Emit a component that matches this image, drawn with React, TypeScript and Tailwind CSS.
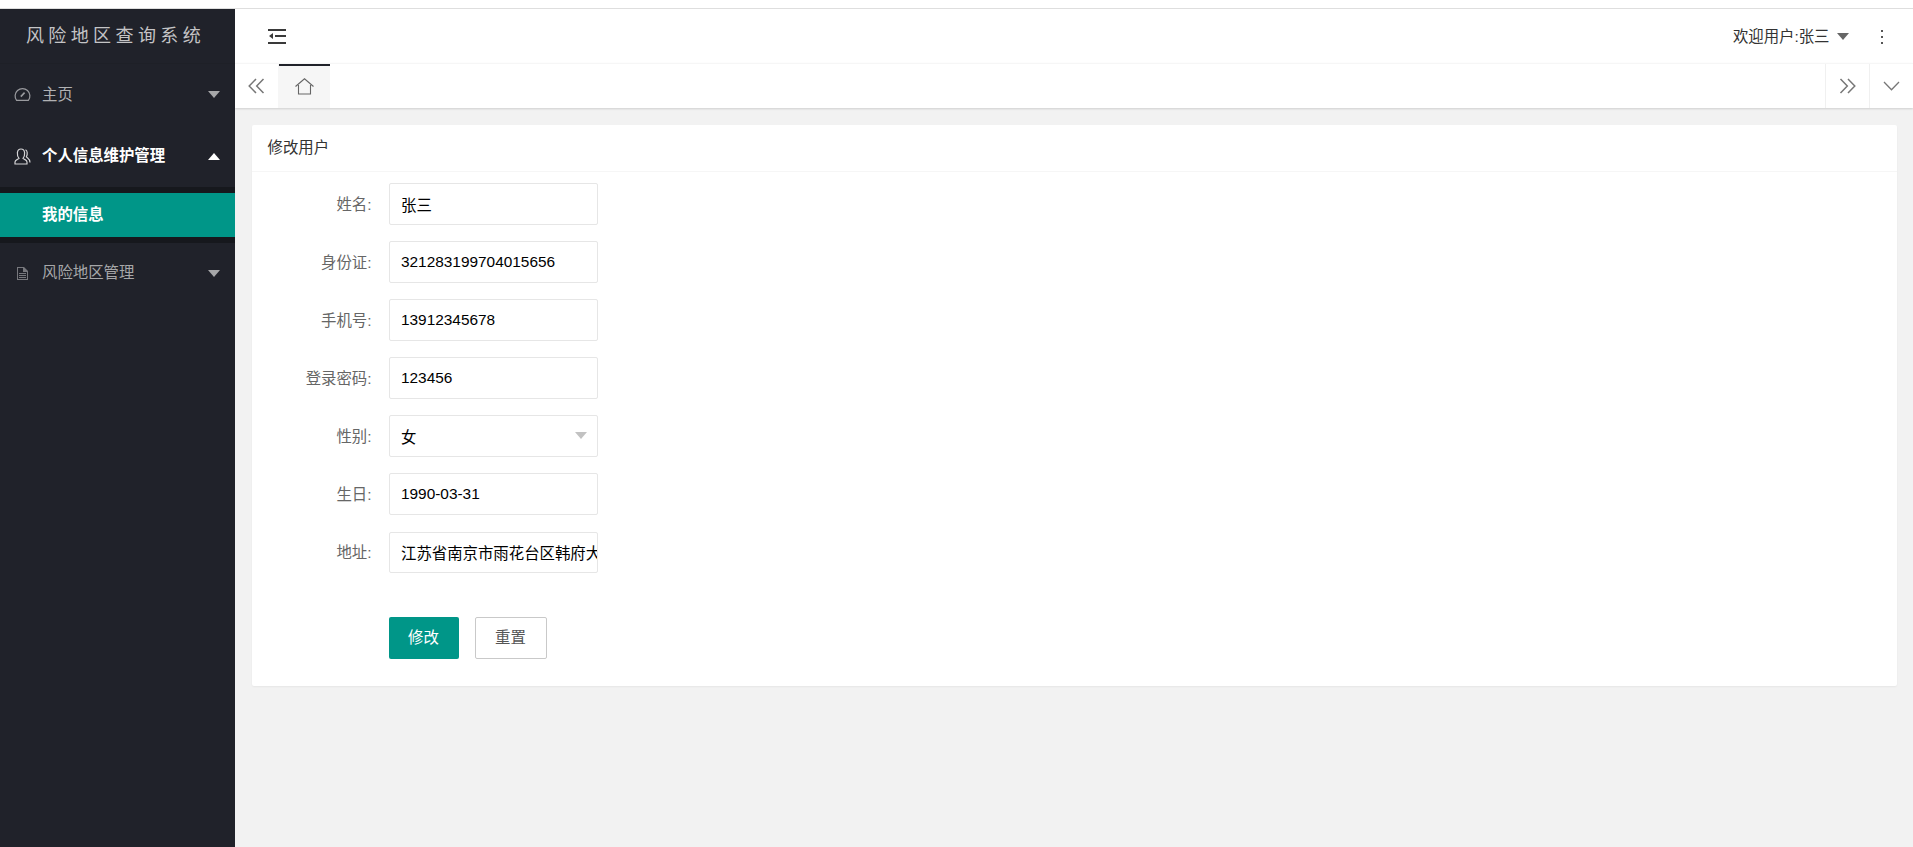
const fontStack = '[font-family:"Liberation_Sans","Noto_Sans_CJK_SC",sans-serif]';

const fields = [
  { label: "姓名:", value: "张三" },
  { label: "身份证:", value: "321283199704015656" },
  { label: "手机号:", value: "13912345678" },
  { label: "登录密码:", value: "123456" },
  { label: "性别:", value: "女", select: true },
  { label: "生日:", value: "1990-03-31" },
  { label: "地址:", value: "江苏省南京市雨花台区韩府大道99号" },
];

const GaugeIcon = () => (
  <svg width="17" height="15" viewBox="0 0 17 15" fill="none" stroke="#9a9b9f" strokeWidth="1.2">
    <path d="M2.6 13.4 A7.4 7.4 0 1 1 14.4 13.4 Z" />
    <path d="M6.8 9.6 L10.6 5.6" strokeWidth="1.6" />
  </svg>
);

const UserIcon = () => (
  <svg width="17" height="17" viewBox="0 0 17 17" fill="none" stroke="#d4d4d6" strokeWidth="1.2">
    <path d="M1 16 V14 C1 12 3.6 11.6 5 10.4 C3.4 8.6 3.2 6.8 3.4 4.6 C3.7 2 5.2 1 7 1 C8.8 1 10.3 2 10.6 4.6 C10.8 6.8 10.6 8.6 9 10.4 C10.4 11.6 13 12 13 14 V16 Z" />
    <path d="M11.5 1.8 C13.4 2.6 13.8 6 12.4 8.8 C13.6 10.4 16 10.6 16 14.6" />
  </svg>
);

const FileIcon = () => (
  <svg width="11" height="13" viewBox="0 0 11 13" fill="#77787d">
    <path d="M0 0 H7 L11 4 V13 H0 Z M1 1 V12 H10 V5 H6 V1 Z" />
    <path d="M2 6 H9 V7 H2 Z M2 8 H9 V9 H2 Z M2 10 H9 V11 H2 Z" />
  </svg>
);

const Caret = ({ up, color }: { up?: boolean; color: string }) => (
  <svg width="12" height="7" viewBox="0 0 12 7" fill={color}>
    <path d={up ? "M6 0 L12 7 H0 Z" : "M0 0 H12 L6 7 Z"} />
  </svg>
);

const App = () => {
  return (
    <div className={`h-screen flex flex-col bg-[#f2f2f2] overflow-hidden ${fontStack}`}>
      <div className="h-[9px] shrink-0 bg-white border-b border-[#dedede]" />
      <div className="flex-1 flex min-h-0">
        <aside className="w-[235px] shrink-0 bg-[#20222a] flex flex-col">
          <div className="h-[55px] pr-[4px] flex items-center justify-center text-[18px] tracking-[4.4px] text-[#c4c4c6] border-b border-[#1e2027]">
            风险地区查询系统
          </div>
          <div className="h-[61px] flex items-center text-[15.4px] text-[#b0b1b3]">
            <span className="w-[14px]" />
            <span className="w-[28px]"><GaugeIcon /></span>
            <span className="flex-1">主页</span>
            <span className="mr-[15px]"><Caret color="#a6a7a9" /></span>
          </div>
          <div className="h-[62px] flex items-center text-[15.4px] font-bold text-white">
            <span className="w-[14px]" />
            <span className="w-[28px]"><UserIcon /></span>
            <span className="flex-1">个人信息维护管理</span>
            <span className="mr-[15px]"><Caret up color="#ffffff" /></span>
          </div>
          <div className="py-[6px] bg-[#16181d]">
            <div className="h-[44px] bg-[#009688] pl-[42px] flex items-center text-[15.4px] font-bold text-white">
              我的信息
            </div>
          </div>
          <div className="h-[60px] flex items-center text-[15.4px] text-[#a6a7a9]">
            <span className="w-[17px]" />
            <span className="w-[25px]"><FileIcon /></span>
            <span className="flex-1">风险地区管理</span>
            <span className="mr-[15px]"><Caret color="#a6a7a9" /></span>
          </div>
        </aside>

        <main className="flex-1 min-w-0 flex flex-col">
          <header className="h-[54px] shrink-0 bg-white flex items-center">
            <svg className="ml-[33px]" width="18" height="15" viewBox="0 0 18 15" fill="#3a3a3a">
              <path d="M0 0 H18 V2 H0 Z M7 6 H18 V8 H7 Z M0 13 H18 V15 H0 Z M5 4 V10 L1 7 Z" />
            </svg>
            <div className="ml-auto flex items-center text-[15.4px] text-[#333] translate-y-px">
              欢迎用户:张三
              <span className="ml-[7px]"><Caret color="#666666" /></span>
              <span className="ml-[32px] mr-[30px] flex flex-col gap-[3.5px]">
                <span className="w-[2.5px] h-[2.5px] bg-[#555]" />
                <span className="w-[2.5px] h-[2.5px] bg-[#555]" />
                <span className="w-[2.5px] h-[2.5px] bg-[#555]" />
              </span>
            </div>
          </header>

          <nav className="h-[45px] shrink-0 bg-white flex border-t border-[#f6f6f6] shadow-[0_1px_2px_rgba(0,0,0,0.15)]">
            <div className="w-[43px] flex items-center justify-center">
              <svg width="17" height="16" viewBox="0 0 17 16" fill="none" stroke="#777" strokeWidth="1.5">
                <path d="M8 1 L1.2 8 L8 15 M15.5 1 L8.7 8 L15.5 15" />
              </svg>
            </div>
            <div className="relative w-[52px] bg-[#f6f6f6] flex items-center justify-center">
              <div className="absolute left-[1px] right-0 top-0 h-[2px] bg-[#20222a]" />
              <svg width="19" height="17" viewBox="0 0 19 17" fill="none" stroke="#666" strokeWidth="1.1">
                <path d="M0.5 8.5 L9.5 0.8 L18.5 8.5 M3.5 7 V16 H15.5 V7" />
              </svg>
            </div>
            <div className="ml-auto w-[44px] border-l border-[#f0f0f0] flex items-center justify-center">
              <svg width="17" height="16" viewBox="0 0 17 16" fill="none" stroke="#777" strokeWidth="1.5">
                <path d="M1.5 1 L8.3 8 L1.5 15 M9 1 L15.8 8 L9 15" />
              </svg>
            </div>
            <div className="w-[44px] border-l border-[#f0f0f0] flex items-center justify-center">
              <svg width="17" height="10" viewBox="0 0 17 10" fill="none" stroke="#777" strokeWidth="1.3">
                <path d="M1 1 L8.5 8.8 L16 1" />
              </svg>
            </div>
          </nav>

          <div className="p-[16.5px] pt-[17px]">
            <section className="h-[561px] bg-white rounded-[2px] shadow-[0_1px_2px_rgba(0,0,0,0.05)]">
              <div className="h-[47px] px-[16px] flex items-center text-[15.4px] text-[#333] border-b border-[#f6f6f6]">
                修改用户
              </div>
              <div className="pt-[11px]">
                {fields.map((field) => (
                  <div key={field.label} className="flex mb-[16.3px]">
                    <label className="w-[120px] h-[41.8px] pt-[1px] flex items-center justify-end text-[15.4px] text-[#666]">
                      {field.label}
                    </label>
                    <div className="relative ml-[17px] w-[209.5px] h-[41.8px]">
                      <input
                        readOnly
                        defaultValue={field.value}
                        className="w-full h-full pl-[11.5px] text-[15.4px] text-black bg-white border border-[#e6e6e6] rounded-[2px] outline-none"
                      />
                      {field.select && (
                        <span className="absolute right-[11px] top-[17px]">
                          <Caret color="#c2c2c2" />
                        </span>
                      )}
                    </div>
                  </div>
                ))}
                <div className="flex pl-[137px] gap-[16px] pt-[27px]">
                  <button className="w-[70px] h-[42px] bg-[#009688] rounded-[2px] text-[15.4px] text-white">
                    修改
                  </button>
                  <button className="w-[72px] h-[42px] bg-white border border-[#c9c9c9] rounded-[2px] text-[15.4px] text-[#555]">
                    重置
                  </button>
                </div>
              </div>
            </section>
          </div>
        </main>
      </div>
    </div>
  );
};

export default App;
